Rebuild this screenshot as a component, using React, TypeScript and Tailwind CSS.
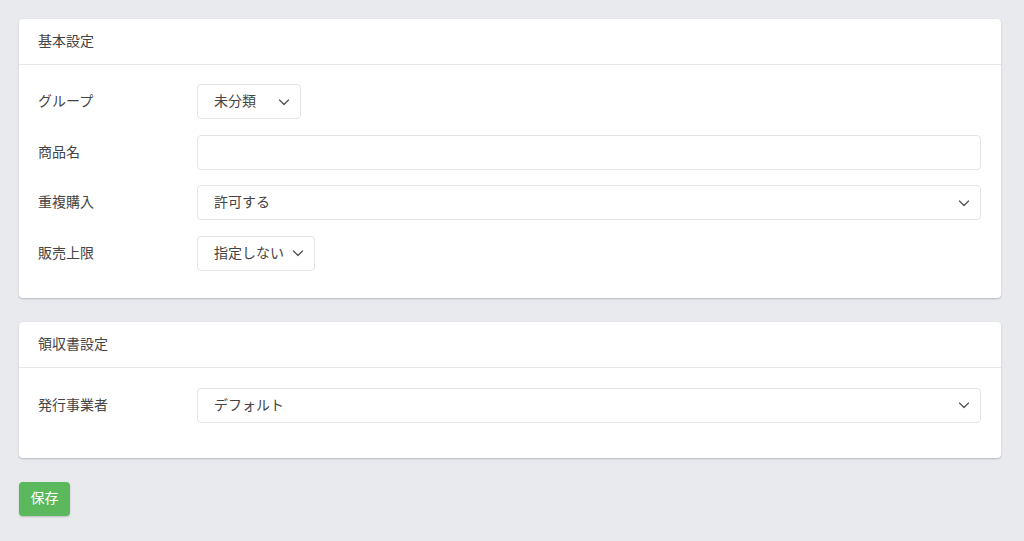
import React from 'react';

const font = { fontFamily: '"Liberation Sans", "Noto Sans CJK JP", sans-serif' };

const Chevron = () => (
  <svg width="12" height="12" viewBox="0 0 12 12" fill="none" className="text-[#555]">
    <path d="M1.5 4l4.5 4.5L10.5 4" stroke="currentColor" strokeWidth="1.3" strokeLinecap="round" strokeLinejoin="round" />
  </svg>
);

type SelectProps = { value: string; width?: string };

const FakeSelect: React.FC<SelectProps> = ({ value, width = 'flex-1' }) => (
  <div
    className={`${width} h-[35px] flex items-center justify-between pl-4 pr-[10px] bg-white border border-[#e5e5e5] rounded-[4px] text-[14px] text-[#444]`}
  >
    <span>{value}</span>
    <Chevron />
  </div>
);

const Row: React.FC<{ label: string; children: React.ReactNode }> = ({ label, children }) => (
  <div className="flex items-center h-[35px]">
    <div className="w-[159px] shrink-0 text-[14px] text-[#444]">{label}</div>
    <div className="flex-1 flex">{children}</div>
  </div>
);

const Card: React.FC<{ title: string; bodyClass: string; children: React.ReactNode }> = ({ title, bodyClass, children }) => (
  <div className="w-[982px] bg-white rounded-[4px] shadow-[0_1px_2px_rgba(0,0,0,0.22)]">
    {/* header */}
    <div className="h-[46px] flex items-center px-[19px] border-b border-[#e6e6e6] text-[14px] text-[#444]">
      {title}
    </div>
    <div className={`pl-[19px] pr-[20px] flex flex-col ${bodyClass}`}>{children}</div>
  </div>
);

export default function App() {
  return (
    <div className="min-h-[541px] bg-[#e9eaed] pl-[19px] pt-[19px]" style={font}>
      <Card title="基本設定" bodyClass="pt-[19px] pb-[27px] gap-[15.5px]">
        <Row label="グループ">
          <FakeSelect value="未分類" width="w-[104px]" />
        </Row>
        <Row label="商品名">
          <div className="flex-1 h-[35px] bg-white border border-[#e5e5e5] rounded-[4px]" />
        </Row>
        <Row label="重複購入">
          <FakeSelect value="許可する" />
        </Row>
        <Row label="販売上限">
          <FakeSelect value="指定しない" width="w-[118px]" />
        </Row>
      </Card>

      <div className="h-[24px]" />

      <Card title="領収書設定" bodyClass="pt-[20px] pb-[35px]">
        <Row label="発行事業者">
          <FakeSelect value="デフォルト" />
        </Row>
      </Card>

      <div className="h-[24px]" />

      <button className="w-[51px] h-[34px] bg-[#5cb85c] text-white text-[14px] rounded-[4px] shadow-[0_1px_2px_rgba(0,0,0,0.2)]">
        保存
      </button>
    </div>
  );
}
